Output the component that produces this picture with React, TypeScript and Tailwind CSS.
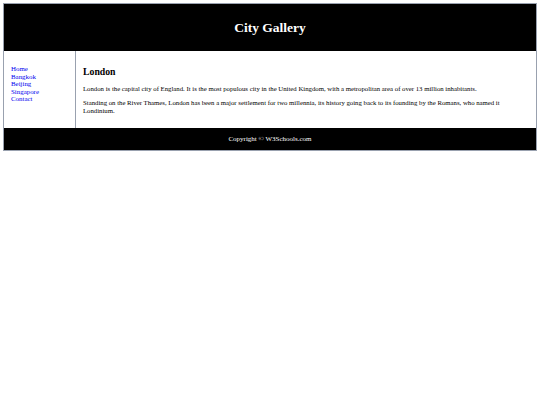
const links = ['Home', 'Bangkok', 'Beijing', 'Singapore', 'Contact'];

export default function App() {
  return (
    <div className="min-h-screen bg-white p-[3px] text-black" style={{ fontFamily: '"Liberation Serif", "Times New Roman", serif' }}>
      <div className="border border-gray-400">
        <header className="flex h-[47px] items-center justify-center bg-black text-white">
          <h1 className="text-[13.5px] font-bold leading-none">City Gallery</h1>
        </header>

        <div className="flex">
          <nav className="w-[71px] shrink-0 pl-[7px] pt-[14px]">
            <ul className="text-[6.9px] leading-[7.6px]">
              {links.map((l) => (
                <li key={l}>
                  <a href="#" className="text-[#0000ee]">{l}</a>
                </li>
              ))}
            </ul>
          </nav>

          <article className="flex-1 border-l border-gray-400 px-[7px] pb-[7px] pt-[15px]">
            <h2 className="mb-[7px] text-[9.75px] font-bold leading-[12px]">London</h2>
            <p className="mb-[6px] text-[6.75px] leading-[8px]">
              London is the capital city of England. It is the most populous city in the United Kingdom, with a metropolitan area of over 13 million inhabitants.
            </p>
            <p className="mb-[6px] text-[6.75px] leading-[8px]">
              Standing on the River Thames, London has been a major settlement for two millennia, its history going back to its founding by the Romans, who named it Londinium.
            </p>
          </article>
        </div>

        <footer className="flex h-[22px] items-center justify-center bg-black text-[7px] text-white">
          Copyright © W3Schools.com
        </footer>
      </div>
    </div>
  );
}
